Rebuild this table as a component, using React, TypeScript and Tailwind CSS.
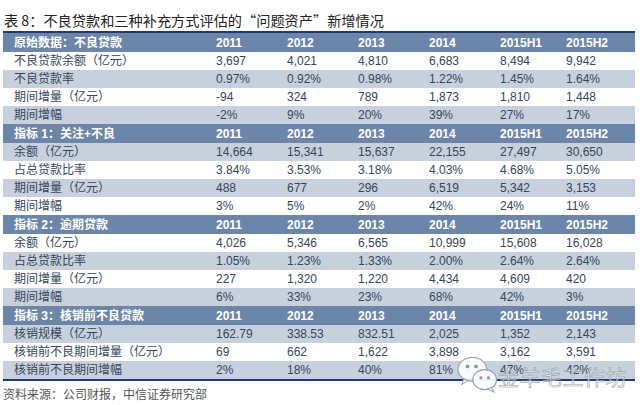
import React from "react";

type Row = { label: string; values: string[]; header?: boolean };

const years = ["2011", "2012", "2013", "2014", "2015H1", "2015H2"];

const rows: Row[] = [
  { label: "原始数据：不良贷款", values: years, header: true },
  { label: "不良贷款余额（亿元）", values: ["3,697", "4,021", "4,810", "6,683", "8,494", "9,942"] },
  { label: "不良贷款率", values: ["0.97%", "0.92%", "0.98%", "1.22%", "1.45%", "1.64%"] },
  { label: "期间增量（亿元）", values: ["-94", "324", "789", "1,873", "1,810", "1,448"] },
  { label: "期间增幅", values: ["-2%", "9%", "20%", "39%", "27%", "17%"] },
  { label: "指标 1：关注+不良", values: years, header: true },
  { label: "余额（亿元）", values: ["14,664", "15,341", "15,637", "22,155", "27,497", "30,650"] },
  { label: "占总贷款比率", values: ["3.84%", "3.53%", "3.18%", "4.03%", "4.68%", "5.05%"] },
  { label: "期间增量（亿元）", values: ["488", "677", "296", "6,519", "5,342", "3,153"] },
  { label: "期间增幅", values: ["3%", "5%", "2%", "42%", "24%", "11%"] },
  { label: "指标 2：逾期贷款", values: years, header: true },
  { label: "余额（亿元）", values: ["4,026", "5,346", "6,565", "10,999", "15,608", "16,028"] },
  { label: "占总贷款比率", values: ["1.05%", "1.23%", "1.33%", "2.00%", "2.64%", "2.64%"] },
  { label: "期间增量（亿元）", values: ["227", "1,320", "1,220", "4,434", "4,609", "420"] },
  { label: "期间增幅", values: ["6%", "33%", "23%", "68%", "42%", "3%"] },
  { label: "指标 3：核销前不良贷款", values: years, header: true },
  { label: "核销规模（亿元）", values: ["162.79", "338.53", "832.51", "2,025", "1,352", "2,143"] },
  { label: "核销前不良期间增量（亿元）", values: ["69", "662", "1,622", "3,898", "3,162", "3,591"] },
  { label: "核销前不良期间增幅", values: ["2%", "18%", "40%", "81%", "47%", "42%"] },
];

const WeChatMark = () => (
  <svg width="44" height="38" viewBox="0 0 46 40">
    <ellipse cx="17" cy="15" rx="15" ry="12.5" fill="#ffffff" fillOpacity="0.85" stroke="#9aa3ad" strokeWidth="1.3" />
    <path d="M8 25 L6 31 L13 27 Z" fill="#ffffff" fillOpacity="0.85" stroke="#9aa3ad" strokeWidth="1.1" />
    <circle cx="12" cy="12" r="2" fill="#8d96a0" />
    <circle cx="21" cy="12" r="2" fill="#8d96a0" />
    <ellipse cx="30" cy="26" rx="12.5" ry="10.5" fill="#ffffff" fillOpacity="0.92" stroke="#9aa3ad" strokeWidth="1.3" />
    <path d="M37 34 L40 39 L33 35.5 Z" fill="#ffffff" fillOpacity="0.9" stroke="#9aa3ad" strokeWidth="1.1" />
    <circle cx="26" cy="24" r="1.7" fill="#8d96a0" />
    <circle cx="34" cy="24" r="1.7" fill="#8d96a0" />
  </svg>
);

export default function App() {
  return (
    <div className="relative w-[640px] h-[405px] bg-white overflow-hidden font-['Liberation_Sans','Noto_Sans_CJK_SC',sans-serif]">
      <div className="h-[31px] flex items-end pb-[4px] pl-[4px]">
        <h1 className="text-[14.2px] leading-none text-[#222] font-['Noto_Sans_CJK_SC',sans-serif]">
          表 8：不良贷款和三种补充方式评估的“问题资产”新增情况
        </h1>
      </div>

      <div className="ml-[3px] w-[632px] border-t-2 border-b-2 border-[#1f3a70]">
        {rows.map((row, i) => {
          const bg = row.header ? "bg-[#6b86a8]" : i % 2 === 0 ? "bg-[#c7d1de]" : "bg-white";
          return (
            <div
              key={i}
              className={`grid grid-cols-[210px_71px_71px_71px_71px_66px_72px] items-center ${
                row.header ? "h-[19px]" : "h-[18px]"
              } ${bg}`}
            >
              <div
                className={`pl-[11px] text-[12px] leading-none whitespace-nowrap ${
                  row.header ? "font-bold text-white" : "text-[#34465c]"
                }`}
              >
                {row.label}
              </div>
              {row.values.map((v, j) => (
                <div
                  key={j}
                  className={`pl-[3px] text-[12px] leading-none whitespace-nowrap ${
                    row.header ? "font-bold text-white" : "text-[#34465c]"
                  }`}
                >
                  {v}
                </div>
              ))}
            </div>
          );
        })}
      </div>

      <p className="mt-[6px] pl-[3px] text-[12px] leading-[14px] text-[#555] font-['Noto_Sans_CJK_SC',sans-serif]">
        资料来源：公司财报，中信证券研究部
      </p>

      {/* watermark */}
      <div className="absolute left-[456px] top-[355px] flex items-center whitespace-nowrap">
        <WeChatMark />
        <span className="ml-[-2px] mt-[4px] text-[21px] leading-none tracking-[0.5px] whitespace-nowrap text-white/50 [-webkit-text-stroke:0.6px_#8f99a3] font-['Noto_Sans_CJK_SC',sans-serif]">
          金羊毛工作坊
        </span>
      </div>
    </div>
  );
}
